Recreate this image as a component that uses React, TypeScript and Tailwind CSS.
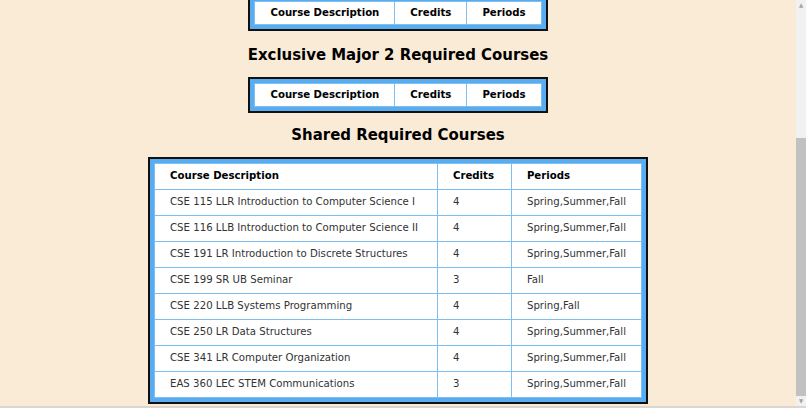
const headers = ['Course Description', 'Credits', 'Periods']

const courses: [string, string, string][] = [
  ['CSE 115 LLR Introduction to Computer Science I', '4', 'Spring,Summer,Fall'],
  ['CSE 116 LLB Introduction to Computer Science II', '4', 'Spring,Summer,Fall'],
  ['CSE 191 LR Introduction to Discrete Structures', '4', 'Spring,Summer,Fall'],
  ['CSE 199 SR UB Seminar', '3', 'Fall'],
  ['CSE 220 LLB Systems Programming', '4', 'Spring,Fall'],
  ['CSE 250 LR Data Structures', '4', 'Spring,Summer,Fall'],
  ['CSE 341 LR Computer Organization', '4', 'Spring,Summer,Fall'],
  ['EAS 360 LEC STEM Communications', '3', 'Spring,Summer,Fall'],
]

// cells sit on a blue table background; 1px spacing shows as the grid lines
const cell = 'bg-white px-[15px] py-0'

function EmptyTable({ className = '' }: { className?: string }) {
  return (
    <div className={`border-2 border-[#111] bg-[#5aacf0] p-[4px] ${className}`}>
      <table className="border-separate border-spacing-[1px] bg-[#7cbff2]">
        <thead>
          <tr>
            {headers.map((h) => (
              <th key={h} className={`h-[22px] text-center font-bold ${cell}`}>
                {h}
              </th>
            ))}
          </tr>
        </thead>
      </table>
    </div>
  )
}

function CourseTable() {
  return (
    <div className="mt-[10px] w-[500px] border-2 border-[#111] bg-[#5aacf0] p-[4px]">
      <table className="w-full border-separate border-spacing-[1px] bg-[#7cbff2]">
        <thead>
          <tr>
            <th className={`h-[25px] w-[282px] text-left font-bold ${cell}`}>Course Description</th>
            <th className={`h-[25px] w-[73px] text-left font-bold ${cell}`}>Credits</th>
            <th className={`h-[25px] text-left font-bold ${cell}`}>Periods</th>
          </tr>
        </thead>
        <tbody>
          {courses.map(([desc, credits, periods]) => (
            <tr key={desc}>
              <td className={`h-[25px] text-[#333] ${cell}`}>{desc}</td>
              <td className={`h-[25px] text-[#333] ${cell}`}>{credits}</td>
              <td className={`h-[25px] text-[#333] ${cell}`}>{periods}</td>
            </tr>
          ))}
        </tbody>
      </table>
    </div>
  )
}

export default function App() {
  return (
    <div className="flex h-[408px] w-[806px] flex-col overflow-hidden bg-[#faebd7] font-['DejaVu_Sans_Condensed','DejaVu_Sans',sans-serif] text-[11.3px] text-black">
      <div className="flex min-h-0 flex-1">
        <div className="flex w-[796px] flex-col items-center">
          <EmptyTable className="mt-[-5px]" />
          <h2 className="mt-[12px] text-[16.6px] leading-[24px] font-bold">
            Exclusive Major 2 Required Courses
          </h2>
          <EmptyTable className="mt-[10px]" />
          <h2 className="mt-[10px] text-[16.6px] leading-[24px] font-bold">
            Shared Required Courses
          </h2>
          <CourseTable />
        </div>
        {/* scrollbar */}
        <div className="flex w-[10px] flex-col bg-[#f1f1f1]">
          <div className="flex h-[10px] items-center justify-center text-[6px] leading-none text-[#a3a3a3]">▲</div>
          <div className="mt-[128px] w-full flex-1 bg-[#c1c1c1]" />
          <div className="flex h-[10px] items-center justify-center text-[6px] leading-none text-[#a3a3a3]">▼</div>
        </div>
      </div>
      <div className="h-[2px] bg-[#dcd6cf]" />
    </div>
  )
}
